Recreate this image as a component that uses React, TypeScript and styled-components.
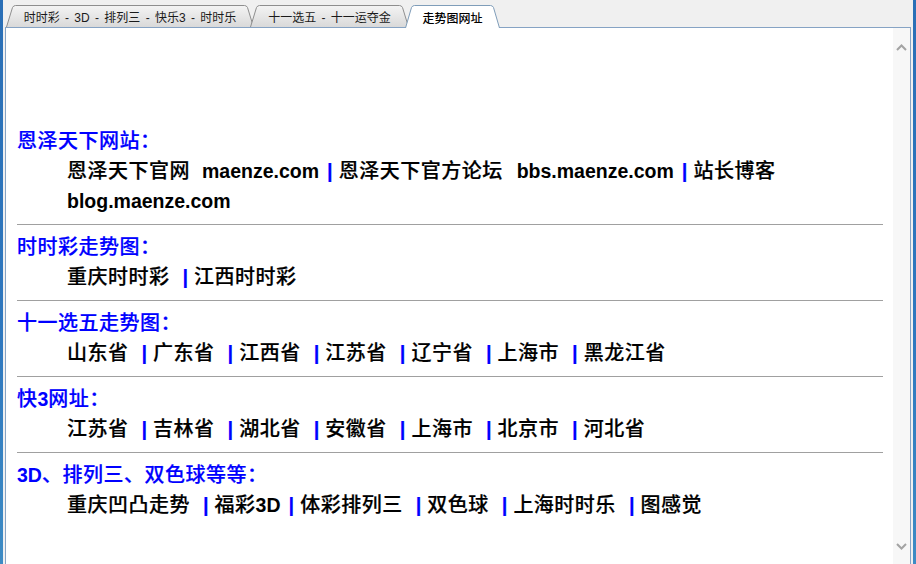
import React from 'react';
import styled, { createGlobalStyle } from 'styled-components';

const GlobalStyle = createGlobalStyle`
  html, body {
    margin: 0;
    height: 100%;
    overflow: hidden;
    background: #f0f0f0;
  }
  #root {
    height: 100%;
  }
`;

const Window = styled.div`
  display: flex;
  height: 100%;
  background: #f0f0f0;
`;

const Edge = styled.div`
  width: 3px;
  flex-shrink: 0;
  background: linear-gradient(180deg, #2a6fb6 0%, #2f78bf 60%, #3d8bc4 100%);
`;

const Main = styled.div`
  flex: 1;
  display: flex;
  flex-direction: column;
  padding: 0 2px;
  min-width: 0;
`;

const TabBar = styled.div`
  display: flex;
  align-items: flex-end;
  height: 27px;
  padding-left: 1px;
  position: relative;
  z-index: 2;
`;

const TabBox = styled.div<{ $w: number; $active?: boolean }>`
  position: relative;
  width: ${(p) => p.$w}px;
  height: ${(p) => (p.$active ? 23 : 22)}px;
  margin-bottom: ${(p) => (p.$active ? -1 : 0)}px;
  margin-left: -4px;
  z-index: ${(p) => (p.$active ? 3 : 1)};
  display: flex;
  align-items: center;
  justify-content: center;
  font-family: 'Liberation Sans', 'Noto Sans CJK SC', sans-serif;
  font-size: 12px;
  word-spacing: 2px;
  color: ${(p) => (p.$active ? '#000' : '#1a1a1a')};
  font-weight: ${(p) => (p.$active ? 500 : 400)};
  white-space: pre;
  &:first-child {
    margin-left: 0;
  }
`;

const TabShape = styled.svg`
  position: absolute;
  left: 0;
  top: 0;
  z-index: -1;
`;

const TabLabel = styled.span`
  position: relative;
  padding-top: 1px;
`;

interface TabProps {
  w: number;
  active?: boolean;
  children: React.ReactNode;
}

const Tab = ({ w, active, children }: TabProps) => {
  const h = active ? 23 : 22;
  const s = 7;
  const d = `M0.5,${h} L${s - 0.5},2.5 Q${s + 0.5},0.5 ${s + 2.5},0.5 L${w - s - 2.5},0.5 Q${w - s - 0.5},0.5 ${w - s + 0.5},2.5 L${w - 0.5},${h}`;
  return (
    <TabBox $w={w} $active={active}>
      <TabShape width={w} height={h} viewBox={`0 0 ${w} ${h}`}>
        <defs>
          <linearGradient id="tabfill" x1="0" y1="0" x2="0" y2="1">
            <stop offset="0" stopColor="#f4f4f4" />
            <stop offset="1" stopColor="#d9d9d9" />
          </linearGradient>
        </defs>
        <path d={d} fill={active ? '#ffffff' : 'url(#tabfill)'} stroke={active ? '#7f9db9' : '#8e8e8e'} strokeWidth={1} />
      </TabShape>
      <TabLabel>{children}</TabLabel>
    </TabBox>
  );
};

const Panel = styled.div`
  flex: 1;
  display: flex;
  background: #fff;
  border: 1px solid #86a3c4;
  border-bottom: none;
  min-height: 0;
  position: relative;
  z-index: 1;
`;

const Content = styled.div`
  flex: 1;
  padding: 98px 10px 0 11px;
  font-family: 'Liberation Sans', 'Noto Sans CJK SC', sans-serif;
  font-size: 20px;
  letter-spacing: 0.5px;
  -webkit-text-stroke: 0.2px currentColor;
`;

const Section = styled.div``;

const Heading = styled.div`
  line-height: 30px;
  color: #0000ff;
  font-weight: 500;
  white-space: nowrap;
`;

const Links = styled.div`
  margin-left: 50px;
  line-height: 30px;
  color: #000;
  font-weight: 500;
  white-space: nowrap;
`;

const Latin = styled.b<{ $gap?: number }>`
  font-weight: bold;
  font-size: 19.5px;
  letter-spacing: 0;
  -webkit-text-stroke: 0;
  margin-left: ${(p) => p.$gap ?? 0}px;
`;

const Sep = styled.span<{ $tight?: boolean }>`
  color: #0000ff;
  font-weight: bold;
  letter-spacing: 0;
  margin: 0 6px 0 ${(p) => (p.$tight ? 8 : 13)}px;
`;

const Rule = styled.hr`
  border: none;
  border-top: 1px solid #a0a0a0;
  margin: 8px 0 7px;
`;

const ScrollBar = styled.div`
  width: 17px;
  flex-shrink: 0;
  background: #f7f7f7;
  display: flex;
  flex-direction: column;
  justify-content: space-between;
  align-items: center;
  padding: 16px 0 14px;
`;

const Arrow = ({ down }: { down?: boolean }) => (
  <svg width="11" height="7" viewBox="0 0 11 7">
    <path
      d={down ? 'M1,1 L5.5,5.5 L10,1' : 'M1,6 L5.5,1.5 L10,6'}
      fill="none"
      stroke="#a3a3a3"
      strokeWidth="2"
    />
  </svg>
);

const List = ({ items }: { items: string[] }) => (
  <Links>
    {items.map((it, i) => (
      <React.Fragment key={it}>
        {i > 0 && <Sep>|</Sep>}
        {it}
      </React.Fragment>
    ))}
  </Links>
);

const App = () => {
  return (
    <>
      <GlobalStyle />
      <Window>
        <Edge />
        <Main>
          <TabBar>
            <Tab w={248}>时时彩 - 3D - 排列三 - 快乐3 - 时时乐</Tab>
            <Tab w={159}>十一选五 - 十一运夺金</Tab>
            <Tab w={95} active>
              走势图网址
            </Tab>
          </TabBar>
          <Panel>
            <Content>
              <Section>
                <Heading>恩泽天下网站：</Heading>
                <Links>
                  恩泽天下官网<Latin $gap={12}>maenze.com</Latin>
                  <Sep $tight>|</Sep>恩泽天下官方论坛<Latin $gap={14}>bbs.maenze.com</Latin>
                  <Sep $tight>|</Sep>站长博客
                  <br />
                  <Latin>blog.maenze.com</Latin>
                </Links>
              </Section>
              <Rule />
              <Section>
                <Heading>时时彩走势图：</Heading>
                <List items={['重庆时时彩', '江西时时彩']} />
              </Section>
              <Rule />
              <Section>
                <Heading>十一选五走势图：</Heading>
                <List items={['山东省', '广东省', '江西省', '江苏省', '辽宁省', '上海市', '黑龙江省']} />
              </Section>
              <Rule />
              <Section>
                <Heading>
                  快<Latin>3</Latin>网址：
                </Heading>
                <List items={['江苏省', '吉林省', '湖北省', '安徽省', '上海市', '北京市', '河北省']} />
              </Section>
              <Rule />
              <Section>
                <Heading>
                  <Latin>3D</Latin>、排列三、双色球等等：
                </Heading>
                <Links>
                  重庆凹凸走势<Sep>|</Sep>福彩<Latin>3D</Latin>
                  <Sep $tight>|</Sep>体彩排列三<Sep>|</Sep>双色球<Sep>|</Sep>上海时时乐<Sep>|</Sep>图感觉
                </Links>
              </Section>
            </Content>
            <ScrollBar>
              <Arrow />
              <Arrow down />
            </ScrollBar>
          </Panel>
        </Main>
        <Edge />
      </Window>
    </>
  );
};

export default App;
